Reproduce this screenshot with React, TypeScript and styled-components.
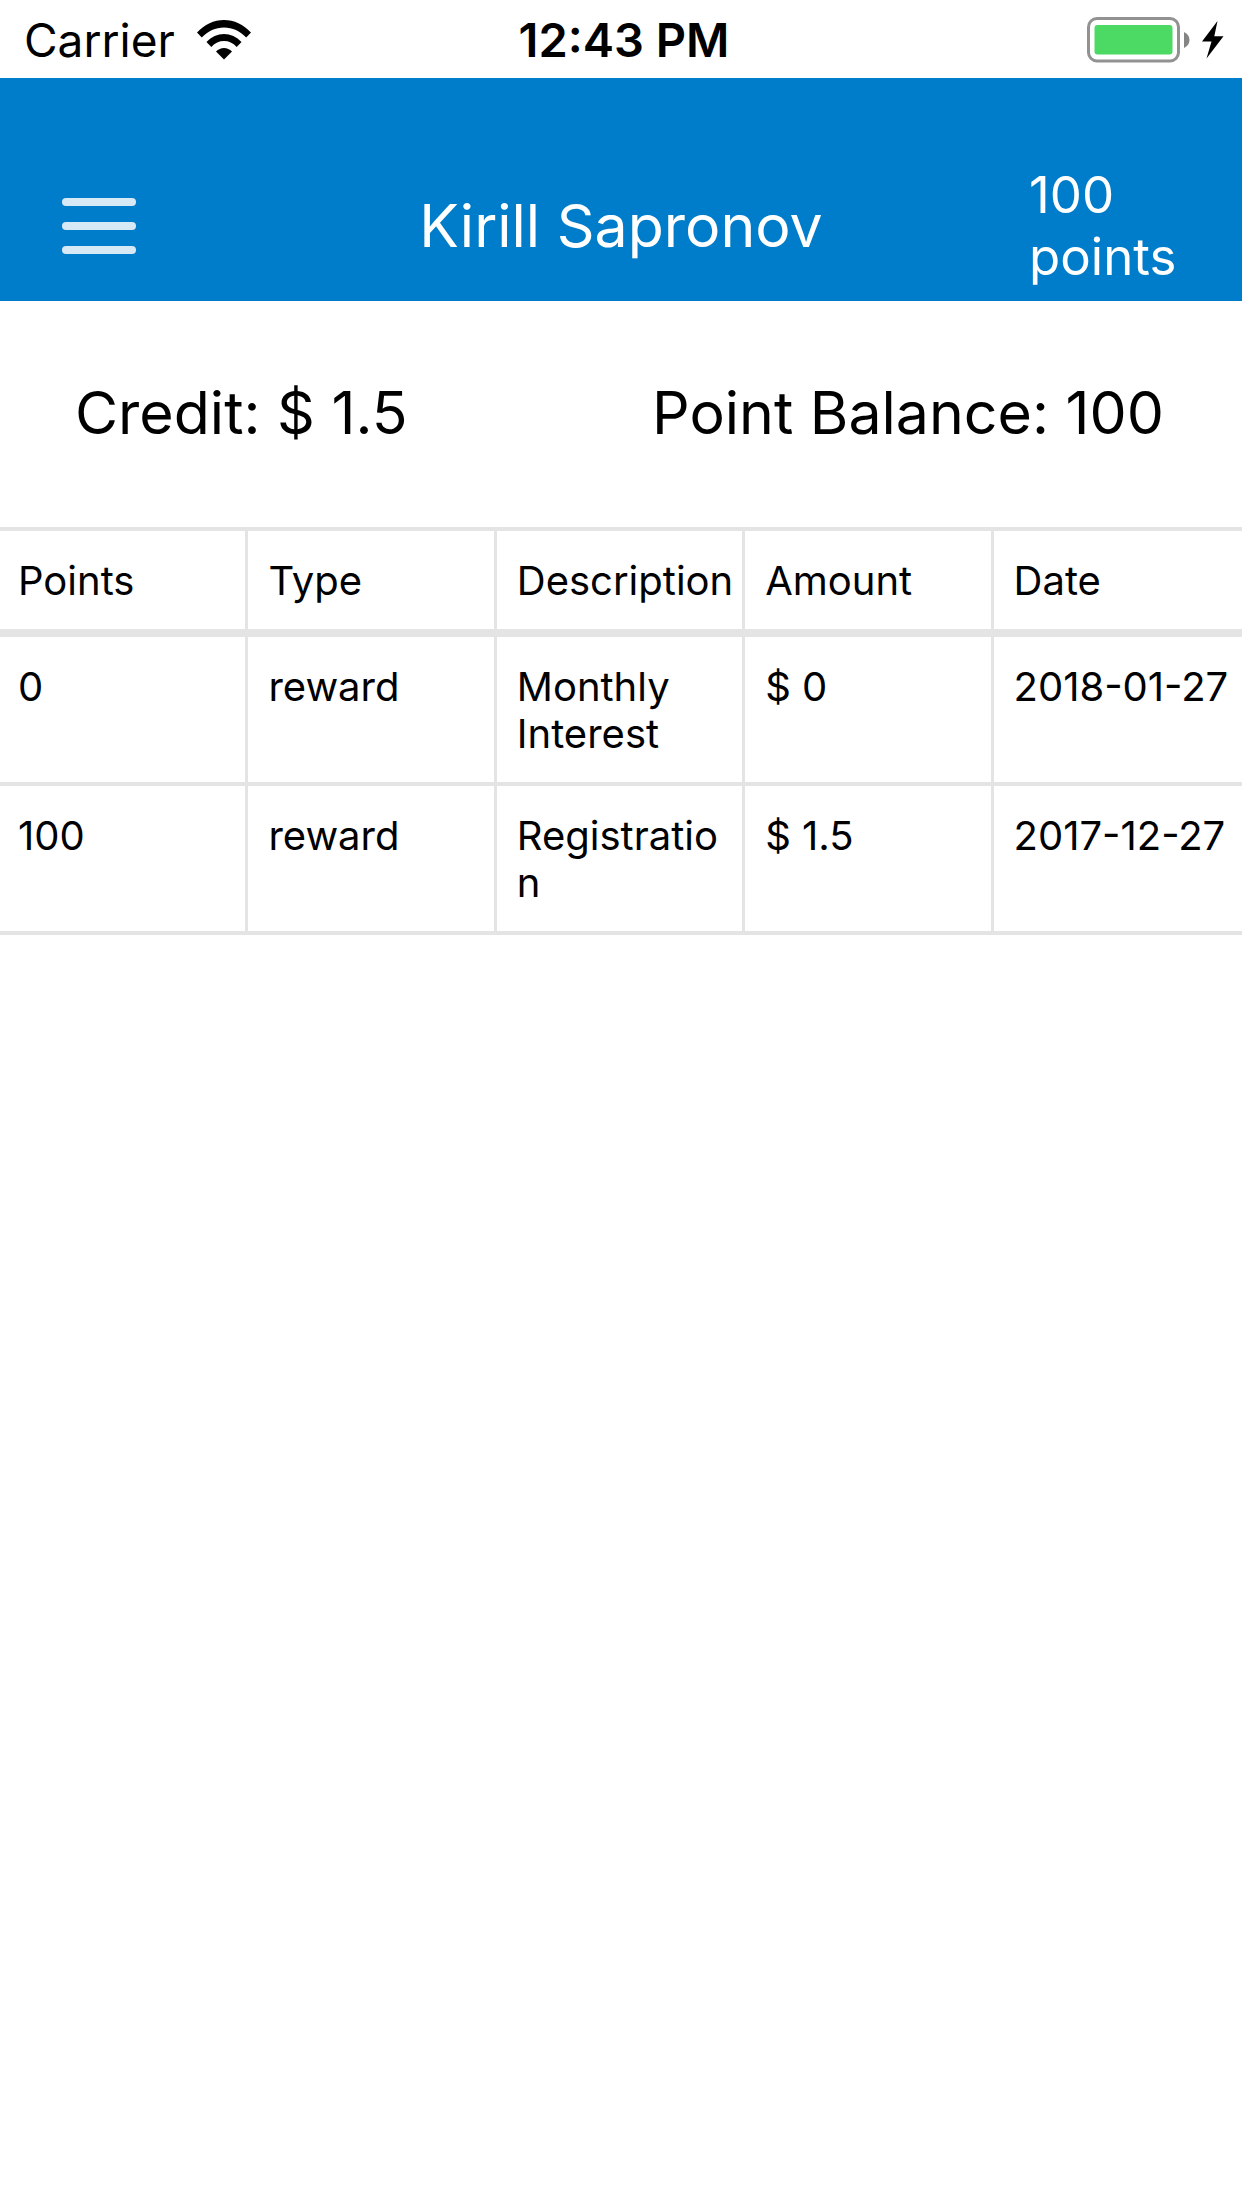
import React from "react";
import styled, { createGlobalStyle } from "styled-components";

const line = "#e4e4e4";

const GlobalStyle = createGlobalStyle`
  *, *::before, *::after {
    box-sizing: border-box;
  }

  body {
    margin: 0;
    background: #ffffff;
    color: #000000;
    font-family: Inter, "Liberation Sans", sans-serif;
  }
`;

const Screen = styled.div`
  display: flex;
  flex-direction: column;
  min-height: 100vh;
`;

const StatusBar = styled.div`
  display: grid;
  grid-template-columns: 1fr auto 1fr;
  align-items: center;
  height: 78px;
  padding: 2px 18px 0 24px;
  font-size: 46px;
  line-height: 56px;
`;

const StatusGroup = styled.div<{ $end?: boolean }>`
  display: flex;
  align-items: center;
  gap: ${(p) => (p.$end ? 12 : 22)}px;
  justify-content: ${(p) => (p.$end ? "flex-end" : "flex-start")};
`;

const Clock = styled.time`
  font-size: 47px;
  font-weight: 600;
`;

const Header = styled.header`
  display: grid;
  grid-template-columns: 151px 1fr 151px;
  align-items: center;
  padding: 86px 62px 13px;
  background: #007dca;
  color: #ffffff;
`;

const MenuButton = styled.button`
  display: flex;
  justify-self: start;
  padding: 0;
  border: 0;
  background: none;
  cursor: pointer;
`;

const Title = styled.h1`
  margin: 0;
  font-size: 59px;
  font-weight: 400;
  line-height: 72px;
  text-align: center;
`;

const HeaderPoints = styled.div`
  font-size: 51px;
  line-height: 62px;
`;

const Summary = styled.section`
  display: flex;
  justify-content: space-between;
  padding: 76px 78px 78px 75px;
  font-size: 59px;
  line-height: 72px;
`;

const History = styled.table`
  width: 100%;
  table-layout: fixed;
  border-collapse: separate;
  border-spacing: 0;
  border-top: 4px solid ${line};
  font-size: 40px;
  line-height: 47px;
`;

const cell = `
  padding: 26px 6px 25px 20px;
  border-right: 3px solid ${line};
  font-weight: 400;
  text-align: left;
  vertical-align: top;
  overflow-wrap: break-word;

  &:first-child {
    padding-left: 18px;
  }

  &:last-child {
    padding-right: 0;
    border-right: 0;
  }
`;

const HeadCell = styled.th`
  ${cell}
  border-bottom: 8px solid ${line};
`;

const Cell = styled.td`
  ${cell}
  border-bottom: 4px solid ${line};
`;

const WifiIcon = () => (
  <svg width="54" height="40" viewBox="0 0 54 40" aria-hidden="true">
    <path d="M0 12.5C7.500 4.500 17 0 27 0s19.500 4.500 27 12.500l-4.800 4.900C43 11 35.500 7.400 27 7.400S11 11 4.800 17.400z" />
    <path d="M9.500 22C14.500 16.700 20.500 14 27 14s12.500 2.700 17.500 8l-4.800 4.900C36 23 31.800 21 27 21s-9 2-12.700 5.900z" />
    <path d="M19 31.500c2.300-2.400 5-3.600 8-3.600s5.700 1.200 8 3.600l-8 8.100z" />
  </svg>
);

const BatteryIcon = () => (
  <svg width="103" height="46" viewBox="0 0 103 46" aria-hidden="true">
    <rect x="1.500" y="1.500" width="90" height="42.500" rx="8.500" fill="none" stroke="#929292" strokeWidth="3" />
    <rect x="7.500" y="8" width="78" height="29.500" rx="3" fill="#4cd964" />
    <path d="M97 15c3.500 1.500 5.500 4.500 5.500 8s-2 6.500-5.500 8z" fill="#858585" />
  </svg>
);

const BoltIcon = () => (
  <svg width="22" height="38" viewBox="0 0 22 38" aria-hidden="true">
    <path d="M15.500 0L0 20.500h9.500L4.500 37.500 21.500 15.300h-9.200z" />
  </svg>
);

const MenuIcon = () => (
  <svg width="74" height="58" viewBox="0 0 74 58" aria-hidden="true">
    <g stroke="#d8e9f6" strokeWidth="8" strokeLinecap="round">
      <path d="M4 5H70" />
      <path d="M4 29H70" />
      <path d="M4 53H70" />
    </g>
  </svg>
);

const columns = ["Points", "Type", "Description", "Amount", "Date"];

const rows = [
  ["0", "reward", "Monthly Interest", "$ 0", "2018-01-27"],
  ["100", "reward", "Registration", "$ 1.5", "2017-12-27"],
];

export default function App() {
  return (
    <Screen>
      <GlobalStyle />
      <StatusBar>
        <StatusGroup>
          <span>Carrier</span>
          <WifiIcon />
        </StatusGroup>
        <Clock dateTime="12:43">12:43 PM</Clock>
        <StatusGroup $end>
          <BatteryIcon />
          <BoltIcon />
        </StatusGroup>
      </StatusBar>
      <Header>
        <MenuButton type="button" aria-label="Menu">
          <MenuIcon />
        </MenuButton>
        <Title>Kirill Sapronov</Title>
        <HeaderPoints>100 points</HeaderPoints>
      </Header>
      <main>
        <Summary>
          <span>Credit: $ 1.5</span>
          <span>Point Balance: 100</span>
        </Summary>
        <History>
          <thead>
            <tr>
              {columns.map((name) => (
                <HeadCell key={name} scope="col">
                  {name}
                </HeadCell>
              ))}
            </tr>
          </thead>
          <tbody>
            {rows.map((row) => (
              <tr key={row[4]}>
                {row.map((value, i) => (
                  <Cell key={columns[i]}>{value}</Cell>
                ))}
              </tr>
            ))}
          </tbody>
        </History>
      </main>
    </Screen>
  );
}
